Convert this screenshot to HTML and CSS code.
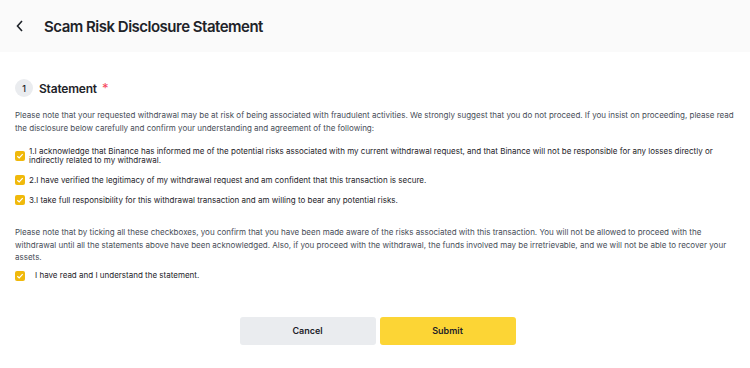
FILE: index.html
```html
<!DOCTYPE html>
<html lang="en">
<head>
    <meta charset="UTF-8">
    <title>Scam Risk Disclosure Statement</title>
    <link rel="stylesheet" href="styles.css">
</head>
<body>
    <div class="header">
        <svg class="back" width="10" height="12" viewBox="0 0 10 12">
            <path d="M7 1 L2.5 6 L7 11" fill="none" stroke="#1e2329" stroke-width="1.6"/>
        </svg>
        <h1>Scam Risk Disclosure Statement</h1>
    </div>

    <div class="content">
        <div class="step">
            <span class="step-num">1</span>
            <span class="step-title">Statement</span>
            <span class="required">*</span>
        </div>

        <p class="para">Please note that your requested withdrawal may be at risk of being associated with fraudulent activities. We strongly suggest that you do not proceed. If you insist on proceeding, please read the disclosure below carefully and confirm your understanding and agreement of the following:</p>

        <div class="checks">
            <label class="check">
                <span class="box"><svg width="8" height="8" viewBox="0 0 8 8"><path d="M1.3 4.2 L3.2 6 L6.7 2.2" fill="none" stroke="#fff" stroke-width="1.2"/></svg></span>
                <span>1.I acknowledge that Binance has informed me of the potential risks associated with my current withdrawal request, and that Binance will not be responsible for any losses directly or indirectly related to my withdrawal.</span>
            </label>
            <label class="check">
                <span class="box"><svg width="8" height="8" viewBox="0 0 8 8"><path d="M1.3 4.2 L3.2 6 L6.7 2.2" fill="none" stroke="#fff" stroke-width="1.2"/></svg></span>
                <span>2.I have verified the legitimacy of my withdrawal request and am confident that this transaction is secure.</span>
            </label>
            <label class="check">
                <span class="box"><svg width="8" height="8" viewBox="0 0 8 8"><path d="M1.3 4.2 L3.2 6 L6.7 2.2" fill="none" stroke="#fff" stroke-width="1.2"/></svg></span>
                <span>3.I take full responsibility for this withdrawal transaction and am willing to bear any potential risks.</span>
            </label>
        </div>

        <p class="para para-note">Please note that by ticking all these checkboxes, you confirm that you have been made aware of the risks associated with this transaction. You will not be allowed to proceed with the withdrawal until all the statements above have been acknowledged. Also, if you proceed with the withdrawal, the funds involved may be irretrievable, and we will not be able to recover your assets.</p>

        <label class="check check-final">
            <span class="box"><svg width="8" height="8" viewBox="0 0 8 8"><path d="M1.3 4.2 L3.2 6 L6.7 2.2" fill="none" stroke="#fff" stroke-width="1.2"/></svg></span>
            <span>I have read and I understand the statement.</span>
        </label>

        <div class="actions">
            <button class="btn btn-cancel">Cancel</button>
            <button class="btn btn-submit">Submit</button>
        </div>
    </div>
</body>
</html>
```

FILE: styles.css
```css
body {
    margin: 0;
    font-family: Inter, 'Noto Sans', sans-serif;
    color: #1e2329;
    background: #fff;
}
.header {
    height: 52px;
    background: #fafafa;
    display: flex;
    align-items: center;
    padding-left: 15px;
}
.back {
    margin-right: 19px;
}
.header h1 {
    margin: 0;
    font-size: 15px;
    font-weight: 600;
    letter-spacing: -0.5px;
}
.content {
    padding: 27px 15px 0;
}
.step {
    display: flex;
    align-items: center;
    height: 18px;
}
.step-num {
    width: 18px;
    height: 18px;
    border-radius: 50%;
    background: #eaecef;
    font-size: 9px;
    font-weight: 500;
    display: flex;
    align-items: center;
    justify-content: center;
    margin-right: 6px;
}
.step-title {
    font-size: 12px;
    font-weight: 600;
    letter-spacing: -0.2px;
}
.required {
    color: #f6465d;
    font-size: 13px;
    margin-left: 5px;
}
.para {
    font-size: 8px;
    line-height: 12.5px;
    color: #474d57;
    margin: 12px 0 0;
}
.checks {
    margin-top: 13px;
    display: flex;
    flex-direction: column;
    gap: 10px;
}
.check {
    display: flex;
    align-items: center;
    gap: 4px;
    font-size: 8px;
    line-height: 9px;
    color: #1e2329;
}
.box {
    flex: none;
    width: 10px;
    height: 10px;
    border-radius: 2px;
    background: #f0b90b;
    display: flex;
    align-items: center;
    justify-content: center;
}
.para-note {
    margin-top: 21px;
}
.check-final {
    margin-top: 7px;
    gap: 10px;
}
.actions {
    display: flex;
    justify-content: center;
    gap: 4px;
    padding-left: 5px;
    margin-top: 36px;
}
.btn {
    width: 136px;
    height: 28px;
    border: none;
    border-radius: 3px;
    font-family: inherit;
    font-size: 9px;
    font-weight: 600;
    color: #1e2329;
    cursor: pointer;
}
.btn-cancel {
    background: #eaecef;
}
.btn-submit {
    background: #fcd535;
}
```
